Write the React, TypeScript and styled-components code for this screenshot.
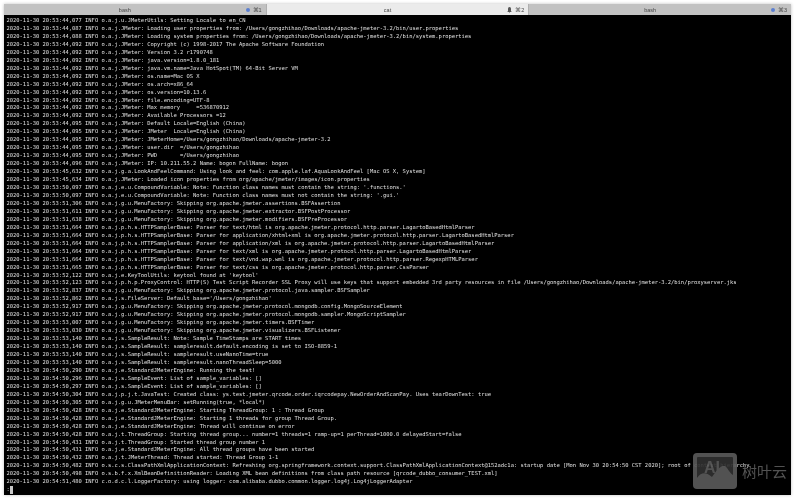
import React from "react";
import styled, { createGlobalStyle } from "styled-components";

const GlobalStyle = createGlobalStyle`
  html, body {
    margin: 0;
    padding: 0;
    background: #fff;
  }
`;

const Page = styled.div`
  position: relative;
  box-sizing: border-box;
  width: 795px;
  height: 500px;
  padding: 4px 4px 5px 4px;
  overflow: hidden;
  background: #fff;
`;

const Window = styled.div`
  display: flex;
  flex-direction: column;
  height: 100%;
  box-shadow: 0 0 3px rgba(0, 0, 0, 0.25);
`;

const TabBar = styled.div`
  display: flex;
  height: 11px;
  flex-shrink: 0;
  font-family: "Liberation Sans", Arial, sans-serif;
  font-size: 5.5px;
  color: #444;
  filter: blur(0.25px);
`;

const Tab = styled.div<{ $active?: boolean }>`
  box-sizing: border-box;
  flex: 1;
  display: flex;
  align-items: center;
  position: relative;
  justify-content: center;
  padding-right: 20px;
  background: ${(p) => (p.$active ? "#ebebeb" : "#c2c2c2")};
  border-right: 1px solid #b0b0b0;
  &:last-child {
    border-right: 0;
  }
`;

const TabStatus = styled.div`
  position: absolute;
  right: 4px;
  top: 0;
  bottom: 0;
  display: flex;
  align-items: center;
  gap: 3px;
`;

const Dot = styled.span`
  width: 4px;
  height: 4px;
  border-radius: 50%;
  background: #5b7fd0;
`;

const Terminal = styled.div`
  flex: 1;
  background: #000;
  padding: 2px 0 0 2.5px;
  overflow: hidden;
  filter: blur(0.3px);
  font-family: "DejaVu Sans Mono", monospace;
  font-size: 5.44px;
  line-height: 7.96px;
  color: #e0e0e0;
`;

const Line = styled.div`
  white-space: pre;
  height: 7.96px;
`;

const Cursor = styled.span`
  display: inline-block;
  width: 3.3px;
  height: 7.5px;
  background: #c8c8c8;
  vertical-align: top;
`;

const Watermark = styled.div`
  position: absolute;
  left: 693px;
  top: 453px;
  display: flex;
  align-items: center;
  gap: 5px;
  color: #5a5a5a;
  font-family: "Noto Sans CJK SC", sans-serif;
  font-size: 15px;
  line-height: 36px;
  opacity: 0.92;
`;

const BellIcon = () => (
  <svg width="5" height="6" viewBox="0 0 10 12">
    <path d="M5 0 C3 0 2 1.5 2 4 L2 8 L0.5 10 L9.5 10 L8 8 L8 4 C8 1.5 7 0 5 0 Z M3.8 10.6 L6.2 10.6 L5 12 Z" fill="#555" />
  </svg>
);

const LogoIcon = () => (
  <svg width="44" height="36" viewBox="0 0 44 36">
    <rect width="44" height="36" rx="4" fill="#5a5a5a" />
    <rect x="4" y="4" width="36" height="27" rx="1" fill="#303030" />
    <path d="M4 31 L4 25 C9 18 14 20 19 24 C25 15 30 10 34 15 C36 18 38 21 40 22 L40 31 Z" fill="#5a5a5a" />
    <text x="11" y="20" fontFamily="Liberation Sans, sans-serif" fontWeight="700" fontSize="16" fill="#5a5a5a">AI</text>
  </svg>
);

const prefix = "2020-11-30 20:5";
const lines = [
  "3:44,077 INFO o.a.j.u.JMeterUtils: Setting Locale to en_CN",
  "3:44,087 INFO o.a.j.JMeter: Loading user properties from: /Users/gongzhihao/Downloads/apache-jmeter-3.2/bin/user.properties",
  "3:44,088 INFO o.a.j.JMeter: Loading system properties from: /Users/gongzhihao/Downloads/apache-jmeter-3.2/bin/system.properties",
  "3:44,092 INFO o.a.j.JMeter: Copyright (c) 1998-2017 The Apache Software Foundation",
  "3:44,092 INFO o.a.j.JMeter: Version 3.2 r1790748",
  "3:44,092 INFO o.a.j.JMeter: java.version=1.8.0_181",
  "3:44,092 INFO o.a.j.JMeter: java.vm.name=Java HotSpot(TM) 64-Bit Server VM",
  "3:44,092 INFO o.a.j.JMeter: os.name=Mac OS X",
  "3:44,092 INFO o.a.j.JMeter: os.arch=x86_64",
  "3:44,092 INFO o.a.j.JMeter: os.version=10.13.6",
  "3:44,092 INFO o.a.j.JMeter: file.encoding=UTF-8",
  "3:44,092 INFO o.a.j.JMeter: Max memory     =536870912",
  "3:44,092 INFO o.a.j.JMeter: Available Processors =12",
  "3:44,095 INFO o.a.j.JMeter: Default Locale=English (China)",
  "3:44,095 INFO o.a.j.JMeter: JMeter  Locale=English (China)",
  "3:44,095 INFO o.a.j.JMeter: JMeterHome=/Users/gongzhihao/Downloads/apache-jmeter-3.2",
  "3:44,095 INFO o.a.j.JMeter: user.dir  =/Users/gongzhihao",
  "3:44,095 INFO o.a.j.JMeter: PWD       =/Users/gongzhihao",
  "3:44,096 INFO o.a.j.JMeter: IP: 10.211.55.2 Name: bogon FullName: bogon",
  "3:45,632 INFO o.a.j.g.a.LookAndFeelCommand: Using look and feel: com.apple.laf.AquaLookAndFeel [Mac OS X, System]",
  "3:45,634 INFO o.a.j.JMeter: Loaded icon properties from org/apache/jmeter/images/icon.properties",
  "3:50,097 INFO o.a.j.e.u.CompoundVariable: Note: Function class names must contain the string: '.functions.'",
  "3:50,097 INFO o.a.j.e.u.CompoundVariable: Note: Function class names must not contain the string: '.gui.'",
  "3:51,306 INFO o.a.j.g.u.MenuFactory: Skipping org.apache.jmeter.assertions.BSFAssertion",
  "3:51,611 INFO o.a.j.g.u.MenuFactory: Skipping org.apache.jmeter.extractor.BSFPostProcessor",
  "3:51,638 INFO o.a.j.g.u.MenuFactory: Skipping org.apache.jmeter.modifiers.BSFPreProcessor",
  "3:51,664 INFO o.a.j.p.h.s.HTTPSamplerBase: Parser for text/html is org.apache.jmeter.protocol.http.parser.LagartoBasedHtmlParser",
  "3:51,664 INFO o.a.j.p.h.s.HTTPSamplerBase: Parser for application/xhtml+xml is org.apache.jmeter.protocol.http.parser.LagartoBasedHtmlParser",
  "3:51,664 INFO o.a.j.p.h.s.HTTPSamplerBase: Parser for application/xml is org.apache.jmeter.protocol.http.parser.LagartoBasedHtmlParser",
  "3:51,664 INFO o.a.j.p.h.s.HTTPSamplerBase: Parser for text/xml is org.apache.jmeter.protocol.http.parser.LagartoBasedHtmlParser",
  "3:51,664 INFO o.a.j.p.h.s.HTTPSamplerBase: Parser for text/vnd.wap.wml is org.apache.jmeter.protocol.http.parser.RegexpHTMLParser",
  "3:51,665 INFO o.a.j.p.h.s.HTTPSamplerBase: Parser for text/css is org.apache.jmeter.protocol.http.parser.CssParser",
  "3:52,122 INFO o.a.j.e.KeyToolUtils: keytool found at 'keytool'",
  "3:52,123 INFO o.a.j.p.h.p.ProxyControl: HTTP(S) Test Script Recorder SSL Proxy will use keys that support embedded 3rd party resources in file /Users/gongzhihao/Downloads/apache-jmeter-3.2/bin/proxyserver.jks",
  "3:52,837 INFO o.a.j.g.u.MenuFactory: Skipping org.apache.jmeter.protocol.java.sampler.BSFSampler",
  "3:52,862 INFO o.a.j.s.FileServer: Default base='/Users/gongzhihao'",
  "3:52,917 INFO o.a.j.g.u.MenuFactory: Skipping org.apache.jmeter.protocol.mongodb.config.MongoSourceElement",
  "3:52,917 INFO o.a.j.g.u.MenuFactory: Skipping org.apache.jmeter.protocol.mongodb.sampler.MongoScriptSampler",
  "3:53,007 INFO o.a.j.g.u.MenuFactory: Skipping org.apache.jmeter.timers.BSFTimer",
  "3:53,030 INFO o.a.j.g.u.MenuFactory: Skipping org.apache.jmeter.visualizers.BSFListener",
  "3:53,140 INFO o.a.j.s.SampleResult: Note: Sample TimeStamps are START times",
  "3:53,140 INFO o.a.j.s.SampleResult: sampleresult.default.encoding is set to ISO-8859-1",
  "3:53,140 INFO o.a.j.s.SampleResult: sampleresult.useNanoTime=true",
  "3:53,140 INFO o.a.j.s.SampleResult: sampleresult.nanoThreadSleep=5000",
  "4:50,290 INFO o.a.j.e.StandardJMeterEngine: Running the test!",
  "4:50,296 INFO o.a.j.s.SampleEvent: List of sample_variables: []",
  "4:50,297 INFO o.a.j.s.SampleEvent: List of sample_variables: []",
  "4:50,304 INFO o.a.j.p.j.t.JavaTest: Created class: ys.test.jmeter.qrcode.order.iqrcodepay.NewOrderAndScanPay. Uses tearDownTest: true",
  "4:50,305 INFO o.a.j.g.u.JMeterMenuBar: setRunning(true, *local*)",
  "4:50,428 INFO o.a.j.e.StandardJMeterEngine: Starting ThreadGroup: 1 : Thread Group",
  "4:50,428 INFO o.a.j.e.StandardJMeterEngine: Starting 1 threads for group Thread Group.",
  "4:50,428 INFO o.a.j.e.StandardJMeterEngine: Thread will continue on error",
  "4:50,428 INFO o.a.j.t.ThreadGroup: Starting thread group... number=1 threads=1 ramp-up=1 perThread=1000.0 delayedStart=false",
  "4:50,431 INFO o.a.j.t.ThreadGroup: Started thread group number 1",
  "4:50,431 INFO o.a.j.e.StandardJMeterEngine: All thread groups have been started",
  "4:50,432 INFO o.a.j.t.JMeterThread: Thread started: Thread Group 1-1",
  "4:50,482 INFO o.s.c.s.ClassPathXmlApplicationContext: Refreshing org.springframework.context.support.ClassPathXmlApplicationContext@152adc1a: startup date [Mon Nov 30 20:54:50 CST 2020]; root of context hierarchy",
  "4:50,498 INFO o.s.b.f.x.XmlBeanDefinitionReader: Loading XML bean definitions from class path resource [qrcode_dubbo_consumer_TEST.xml]",
  "4:51,480 INFO c.o.d.c.l.LoggerFactory: using logger: com.alibaba.dubbo.common.logger.log4j.Log4jLoggerAdapter",
];

const App = () => {
  return (
    <Page>
      <GlobalStyle />
      <Window>
        <TabBar>
          <Tab>
            bash
            <TabStatus>
              <Dot />
              ⌘1
            </TabStatus>
          </Tab>
          <Tab $active>
            cat
            <TabStatus>
              <BellIcon />
              ⌘2
            </TabStatus>
          </Tab>
          <Tab>
            bash
            <TabStatus>
              <Dot />
              ⌘3
            </TabStatus>
          </Tab>
        </TabBar>
        <Terminal>
          {lines.map((text, i) => (
            <Line key={i}>{prefix + text}</Line>
          ))}
          <Line>
            :<Cursor />
          </Line>
        </Terminal>
      </Window>
      <Watermark>
        <LogoIcon />
        树叶云
      </Watermark>
    </Page>
  );
};

export default App;
